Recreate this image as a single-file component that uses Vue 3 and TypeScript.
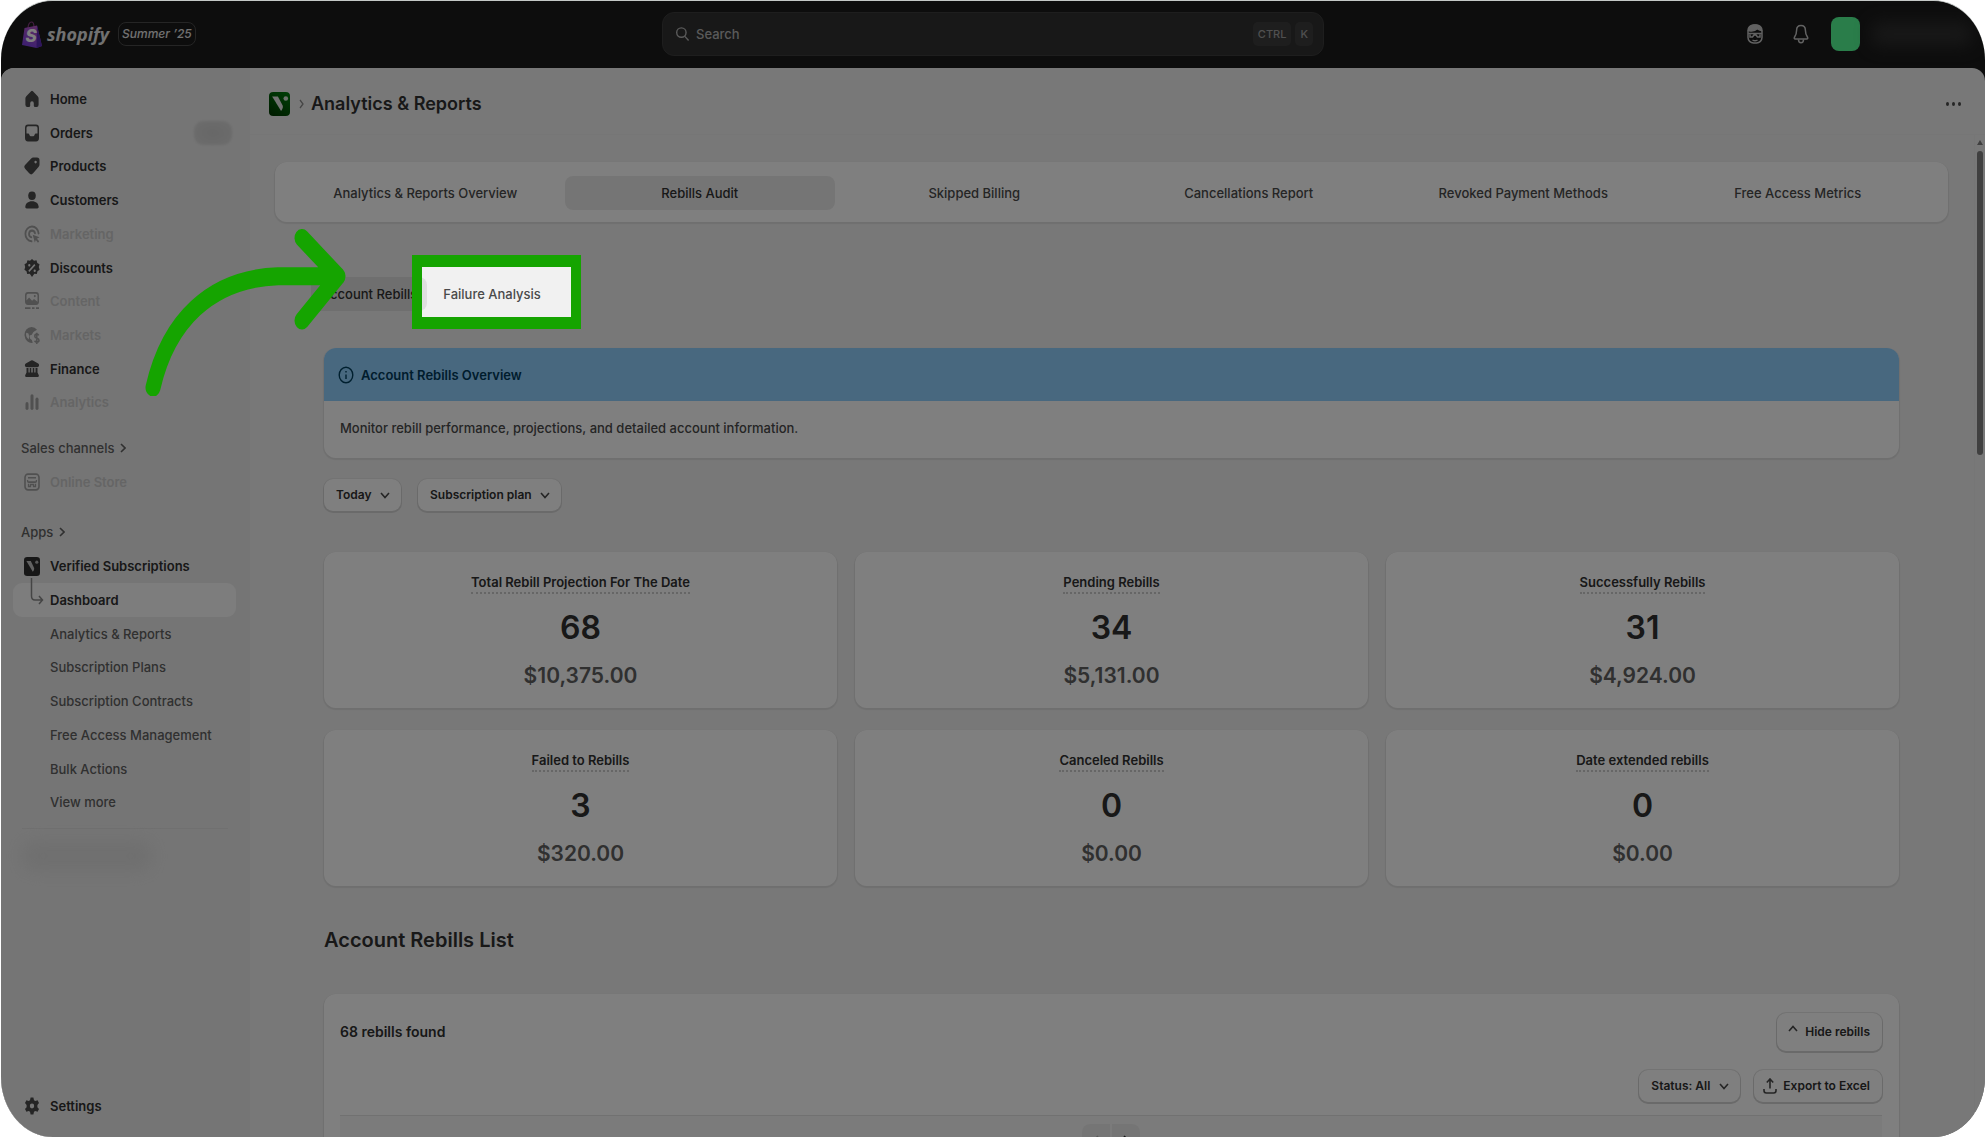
<script setup lang="ts">
import { ref } from 'vue'

interface NavItem {
  label: string
  icon: string
  muted?: boolean
  badge?: boolean
}

interface Metric {
  title: string
  count: number
  amount: string
}

const icons: Record<string, string> = {
  home: '<path d="M8.9 1.1a1.4 1.4 0 0 0-1.8 0L2.3 5.6A2.6 2.6 0 0 0 1.4 7.500V13A2 2 0 0 0 3.400 15h1.800a1 1 0 0 0 1-1v-2.300a1.800 1.800 0 0 1 3.600 0V14a1 1 0 0 0 1 1h1.800a2 2 0 0 0 2-2V7.500a2.600 2.600 0 0 0-.9-1.900z"/>',
  orders: '<path fill-rule="evenodd" d="M4 .5h8A3 3 0 0 1 15 3.500v9a3 3 0 0 1-3 3H4a3 3 0 0 1-3-3v-9A3 3 0 0 1 4 .5zM4 2A1.500 1.500 0 0 0 2.500 3.500V8.500h1.700c.5 0 .9.300 1.100.8l.4.900c.2.400.6.600 1 .6h2.600c.4 0 .8-.2 1-.6l.4-.9c.2-.5.6-.8 1.100-.8h1.700v-5A1.500 1.500 0 0 0 12 2z"/>',
  products: '<path fill-rule="evenodd" d="M9.300.5h3.700a2.500 2.500 0 0 1 2.500 2.500v3.700c0 .8-.3 1.500-.8 2l-5.600 5.800a2.700 2.700 0 0 1-3.900 0L1.300 10.700a2.700 2.700 0 0 1 0-3.900l5.900-5.500A3 3 0 0 1 9.300.5zM11.600 5.700a1.200 1.200 0 1 0 0-2.400 1.200 1.200 0 0 0 0 2.400z"/>',
  customers: '<circle cx="8" cy="4.200" r="3.800"/><path d="M1.300 14C1.600 11 4 9 8 9s6.400 2 6.700 5c.1.900-.6 1.500-1.400 1.500H2.700c-.8 0-1.500-.6-1.400-1.500z"/>',
  marketing: '<path d="M7.500 14.500A6.600 6.600 0 1 1 14.600 7.500" fill="none" stroke="currentColor" stroke-width="1.800" stroke-linecap="round"/><path d="M7.300 10.900A3 3 0 1 1 11 7.400" fill="none" stroke="currentColor" stroke-width="1.800" stroke-linecap="round"/><path d="m8.700 8.700 6.800 2.200-2.600 1.300 2.300 2.300-1.200 1.200-2.200-2.300-1 2.200z"/>',
  discounts: '<path fill-rule="evenodd" d="m8 0 2 1.500 2.500-.3.800 2.300 2.200 1.200L14.800 7.200l.8 2.400-2.100 1.300-.7 2.400-2.500-.1L8 16l-2.200-2.800-2.600.1-.7-2.400L.4 9.600l.8-2.400L.5 4.700l2.200-1.200.8-2.300L6 1.500zM5.300 6.600a1.100 1.100 0 1 0 0-2.200 1.100 1.100 0 0 0 0 2.200zm5.400 5a1.100 1.100 0 1 0 0-2.200 1.100 1.100 0 0 0 0 2.200zM10.300 4.500l-6 6 1.100 1.100 6-6z"/>',
  content: '<path fill-rule="evenodd" d="M4 0h8a3 3 0 0 1 3 3v5.500a3 3 0 0 1-3 3H4a3 3 0 0 1-3-3V3a3 3 0 0 1 3-3zm0 1.600A1.500 1.500 0 0 0 2.500 3v4.500l2.600-2.700 3 3 1.900-1.600 3.500 2.500V3A1.500 1.500 0 0 0 12 1.600zm6.800 3a1 1 0 1 0 0-2 1 1 0 0 0 0 2z"/><path d="M1 13.500h5.500V15H1zM8 13.500h2.500V15H8zM12 13.500h3V15h-3z"/>',
  markets: '<path fill-rule="evenodd" d="M7.500.8a7.100 7.100 0 1 0 1.300 14.100l-1-2.400L6 11.200 5.600 8.500l2.200-.8 1.600-2.300L13 3.300A7 7 0 0 0 7.500.8zM2.300 6l2.200.7.7 2.700-.6 2.700A5.500 5.500 0 0 1 2.300 6z"/><path d="M14.800 8.300c-.5-.8-1.300-1-2-1-1.200 0-2 .7-2 1.700 0 2.500 4.200 1.200 4.200 3.600 0 1-.9 1.700-2.200 1.700-.9 0-1.700-.4-2.200-1.200M12.800 6v10" fill="none" stroke="currentColor" stroke-width="1.500"/>',
  finance: '<path d="M7.100.5a2 2 0 0 1 1.800 0l5.300 2.700c1.500.8 1 3.300-.9 3.300H2.700C.8 6.500.3 4 1.800 3.200zM2.500 7h2v4.500h-2zM5.700 7h1.600v4.500H5.700zM8.700 7h1.600v4.500H8.700zM11.500 7h2v4.500h-2zM2.500 11h11l1.300 2.600c.3.800-.2 1.400-1 1.400H2.200c-.8 0-1.300-.6-1-1.400z"/>',
  analytics: '<rect x="6.500" y="1" width="3" height="14" rx="1.500"/><rect x="1.500" y="8" width="3" height="7" rx="1.500"/><rect x="11.500" y="4" width="3" height="11" rx="1.500"/>',
  store: '<rect x="1" y="1" width="14" height="14" rx="3" fill="none" stroke="currentColor" stroke-width="1.600"/><path d="M4 4.200h8M3.600 6.200v1.200c0 1 2.200 1 2.200 0 0 1 2.200 1 2.200 0 0 1 2.200 1 2.200 0 0 1 2.200 1 2.200 0V6.200M4.500 9.500V12h2V10.200h3V12h2V9.500" fill="none" stroke="currentColor" stroke-width="1.300"/>',
  settings: '<path fill-rule="evenodd" d="M6.600.5h2.800l.6 2.300 1.300.7 2.300-.6 1.400 2.400L13.400 7v2l1.600 1.700-1.400 2.400-2.300-.6-1.300.7-.6 2.300H6.600L6 13.200l-1.300-.7-2.300.6L1 10.700 2.600 9V7L1 5.300l1.400-2.400 2.300.6L6 2.800zM8 10.200a2.200 2.200 0 1 0 0-4.400 2.200 2.200 0 0 0 0 4.400z"/>',
}

const mainNav: NavItem[] = [
  { label: 'Home', icon: 'home' },
  { label: 'Orders', icon: 'orders', badge: true },
  { label: 'Products', icon: 'products' },
  { label: 'Customers', icon: 'customers' },
  { label: 'Marketing', icon: 'marketing', muted: true },
  { label: 'Discounts', icon: 'discounts' },
  { label: 'Content', icon: 'content', muted: true },
  { label: 'Markets', icon: 'markets', muted: true },
  { label: 'Finance', icon: 'finance' },
  { label: 'Analytics', icon: 'analytics', muted: true },
]

const appPages = [
  'Dashboard',
  'Analytics & Reports',
  'Subscription Plans',
  'Subscription Contracts',
  'Free Access Management',
  'Bulk Actions',
  'View more',
]

const tabs = [
  'Analytics & Reports Overview',
  'Rebills Audit',
  'Skipped Billing',
  'Cancellations Report',
  'Revoked Payment Methods',
  'Free Access Metrics',
]
const activeTab = ref('Rebills Audit')

const metrics: Metric[] = [
  { title: 'Total Rebill Projection For The Date', count: 68, amount: '$10,375.00' },
  { title: 'Pending Rebills', count: 34, amount: '$5,131.00' },
  { title: 'Successfully Rebills', count: 31, amount: '$4,924.00' },
  { title: 'Failed to Rebills', count: 3, amount: '$320.00' },
  { title: 'Canceled Rebills', count: 0, amount: '$0.00' },
  { title: 'Date extended rebills', count: 0, amount: '$0.00' },
]
</script>

<template>
  <div class="frame">
    <header class="topbar">
      <div class="brand">
        <svg class="bag" viewBox="0 0 20 27" aria-hidden="true">
          <defs>
            <linearGradient id="bag-fill" x1="0.8" y1="0" x2="0.4" y2="1">
              <stop offset="0" stop-color="#c05ac8" />
              <stop offset="1" stop-color="#7a3fe0" />
            </linearGradient>
          </defs>
          <path d="M6 7C6 3 8 1 9.500 1S12 3 12 6" fill="none" stroke="#8a3c86" stroke-width="1.200" />
          <path d="M2.500 7 15 4.500 20 25 14.500 27 0 24z" fill="url(#bag-fill)" />
          <path d="M15 4.500 20 25l-5.500 2z" fill="#5a2bb8" />
          <text x="3.500" y="21" class="bag-letter">S</text>
        </svg>
        <span class="wordmark">shopify</span>
        <span class="edition">Summer ’25</span>
      </div>

      <label class="search">
        <svg viewBox="0 0 16 16" aria-hidden="true">
          <circle cx="6.800" cy="6.500" r="5" />
          <path d="m10.500 10.500 4 4.500" />
        </svg>
        <input type="search" placeholder="Search" aria-label="Search" />
        <kbd>CTRL</kbd>
        <kbd>K</kbd>
      </label>

      <div class="tools">
        <button type="button" class="icon-button" aria-label="Assistant">
          <svg class="sidekick" viewBox="0 0 16 20" aria-hidden="true">
            <rect x="1" y="1" width="14" height="18" rx="5.500" />
            <path class="solid" d="M1.500 6.500C2 3 4.500 1 8 1s6 2 6.500 5.500c-1.800-.2-3-.8-4-2C8.500 6.500 5 7.500 1.500 6.500z" />
            <path d="M1.200 9.500h13.600M3 10.500v2.500h2.500l1.500-2h2l1.500 2H13v-2.500M5.500 16c1.500 1 3.500 1 5 0" />
          </svg>
        </button>
        <button type="button" class="icon-button" aria-label="Notifications">
          <svg class="bell" viewBox="0 0 16 20" aria-hidden="true">
            <path d="M8 1.500c-2.800 0-4.400 2-4.400 4.800 0 4.200-1.200 5.600-2.200 7-.5.800 0 1.700.8 1.700h11.600c.8 0 1.300-.9.800-1.700-1-1.400-2.200-2.800-2.200-7C12.400 3.500 10.800 1.500 8 1.500z" />
            <path d="M5.500 15.500c0 2 1 3.300 2.500 3.300s2.500-1.300 2.500-3.300" />
          </svg>
        </button>
        <div class="account">
          <span class="avatar"></span>
          <span class="account-name"></span>
        </div>
      </div>
    </header>

    <div class="shell">
      <nav class="sidebar" aria-label="Main">
        <ul class="nav-list nav-main">
          <li v-for="item in mainNav" :key="item.label">
            <a href="#" class="nav-link" :class="{ muted: item.muted }">
              <svg class="nav-icon" viewBox="0 0 16 16" preserveAspectRatio="none" aria-hidden="true" v-html="icons[item.icon]"></svg>
              <span>{{ item.label }}</span>
              <i v-if="item.badge" class="count-badge"></i>
            </a>
          </li>
        </ul>

        <button type="button" class="section-toggle">
          Sales channels
          <svg viewBox="0 0 6 10" aria-hidden="true"><path d="m1 1 4 4-4 4" /></svg>
        </button>
        <a href="#" class="nav-link muted">
          <svg class="nav-icon" viewBox="0 0 16 16" preserveAspectRatio="none" aria-hidden="true" v-html="icons.store"></svg>
          <span>Online Store</span>
        </a>

        <button type="button" class="section-toggle apps-toggle">
          Apps
          <svg viewBox="0 0 6 10" aria-hidden="true"><path d="m1 1 4 4-4 4" /></svg>
        </button>
        <ul class="nav-list nav-apps">
          <li>
            <a href="#" class="nav-link">
              <svg class="app-icon" viewBox="0 0 20 24" preserveAspectRatio="none" aria-hidden="true">
                <rect width="20" height="24" rx="4" fill="#2e2e2e" />
                <path d="M3 5h5.500l4 8.500c.6 1.500 0 3.500-1.500 5z" fill="#c4c4c4" />
                <circle cx="16" cy="6.500" r="2" fill="#b0b0b0" />
              </svg>
              <span>Verified Subscriptions</span>
            </a>
          </li>
          <li v-for="(page, i) in appPages" :key="page">
            <a href="#" class="nav-link sub" :class="{ active: i === 0 }">
              <svg v-if="i === 0" class="branch" viewBox="0 0 14 28" aria-hidden="true">
                <path d="M1.500 0v18c0 2.500 1 4 3.500 4h7M9 18l3.500 4L9 26" />
              </svg>
              <span>{{ page }}</span>
            </a>
          </li>
        </ul>
        <div class="pinned"><i></i></div>

        <a href="#" class="nav-link settings">
          <svg class="nav-icon" viewBox="0 0 16 16" preserveAspectRatio="none" aria-hidden="true" v-html="icons.settings"></svg>
          <span>Settings</span>
        </a>
      </nav>

      <main class="main">
        <div class="page-head">
          <svg class="page-icon" viewBox="0 0 20 24" preserveAspectRatio="none" aria-hidden="true">
            <defs>
              <linearGradient id="app-fill" x1="0.2" y1="1" x2="0.8" y2="0">
                <stop offset="0" stop-color="#003a00" />
                <stop offset="1" stop-color="#007a0c" />
              </linearGradient>
            </defs>
            <rect width="20" height="24" rx="4" fill="url(#app-fill)" />
            <path d="M3 4.500h5.500l4.500 9c.6 1.500 0 3.500-1.500 5.500z" fill="#e6e6e6" />
            <circle cx="16" cy="6.500" r="2.200" fill="#d8e4d8" />
          </svg>
          <svg class="crumb" viewBox="0 0 6 10" aria-hidden="true"><path d="m1 1 3 4-3 4" /></svg>
          <h1>Analytics &amp; Reports</h1>
          <button type="button" class="more" aria-label="More actions"><i></i><i></i><i></i></button>
        </div>

        <div class="scroll-row">
          <div class="content">
            <div class="tab-card" role="tablist">
              <button
                v-for="tab in tabs"
                :key="tab"
                type="button"
                role="tab"
                class="tab"
                :class="{ active: tab === activeTab }"
                :aria-selected="tab === activeTab"
                @click="activeTab = tab"
              >
                {{ tab }}
              </button>
            </div>

            <div class="subtabs">
              <button type="button" class="subtab active">Account Rebills</button>
              <div class="target">
                <button type="button" class="subtab">Failure Analysis</button>
                <i class="spotlight"></i>
              </div>
            </div>

            <div class="body">
              <section class="banner">
                <h2>
                  <svg viewBox="0 0 16 18" aria-hidden="true">
                    <ellipse cx="8" cy="9" rx="6.800" ry="7.800" />
                    <path d="M8 8.500v4.500M8 5v1.500" />
                  </svg>
                  Account Rebills Overview
                </h2>
                <p>Monitor rebill performance, projections, and detailed account information.</p>
              </section>

              <div class="filters">
                <span class="picker">
                  <select aria-label="Date range"><option>Today</option></select>
                  <svg viewBox="0 0 10 7" aria-hidden="true"><path d="m1 1 4 4.500L9 1" /></svg>
                </span>
                <span class="picker">
                  <select aria-label="Subscription plan"><option>Subscription plan</option></select>
                  <svg viewBox="0 0 10 7" aria-hidden="true"><path d="m1 1 4 4.500L9 1" /></svg>
                </span>
              </div>

              <div class="metrics">
                <article v-for="metric in metrics" :key="metric.title" class="metric">
                  <h3>{{ metric.title }}</h3>
                  <strong>{{ metric.count }}</strong>
                  <span>{{ metric.amount }}</span>
                </article>
              </div>

              <h2 class="list-title">Account Rebills List</h2>

              <section class="list-card">
                <div class="list-head">
                  <h3>68 rebills found</h3>
                  <button type="button" class="button tall">
                    <svg class="caret-up" viewBox="0 0 10 7" aria-hidden="true"><path d="m1 6 4-4.500L9 6" /></svg>
                    Hide rebills
                  </button>
                </div>
                <div class="list-actions">
                  <span class="picker">
                    <select aria-label="Status"><option>Status: All</option></select>
                    <svg viewBox="0 0 10 7" aria-hidden="true"><path d="m1 1 4 4.500L9 1" /></svg>
                  </span>
                  <button type="button" class="button">
                    <svg class="export" viewBox="0 0 14 16" aria-hidden="true">
                      <path d="M7 10.500V1.200M3.800 4.500 7 1l3.200 3.500M1 11v1.500C1 14 1.800 15 3.300 15h7.400c1.500 0 2.300-1 2.300-2.500V11" />
                    </svg>
                    Export to Excel
                  </button>
                </div>
                <div class="pager">
                  <button type="button" disabled aria-label="Previous page">
                    <svg viewBox="0 0 6 10" aria-hidden="true"><path d="M5 1 1 5l4 4" /></svg>
                  </button>
                  <button type="button" aria-label="Next page">
                    <svg viewBox="0 0 6 10" aria-hidden="true"><path d="m1 1 4 4-4 4" /></svg>
                  </button>
                </div>
              </section>
            </div>
          </div>

          <div class="scrollbar" aria-hidden="true">
            <svg viewBox="0 0 6 5"><path d="M3 0 6 5H0z" /></svg>
            <i></i>
          </div>
        </div>
      </main>
    </div>

    <svg class="arrow" viewBox="0 0 204 142" preserveAspectRatio="none" aria-hidden="true">
      <path d="M9 135C24 80 66 44 134 42q30 0 60 0M158 10l36 32-36 37" />
    </svg>
  </div>
</template>

<style>
body {
  margin: 0;
  background: #fff;
}
</style>

<style scoped>
* {
  box-sizing: border-box;
}

.frame {
  position: relative;
  display: flex;
  flex-direction: column;
  height: 100vh;
  margin: 0 1px;
  overflow: hidden;
  border-top: 1px solid #c4c8c6;
  border-radius: 52px / 60px;
  background: #1a1a1a;
  color: #303030;
  font-family: Inter, "Liberation Sans", sans-serif;
  font-size: 13px;
  font-weight: 500;
  line-height: 20px;
}

button,
input,
select {
  padding: 0;
  border: 0;
  background: none;
  color: inherit;
  font: inherit;
}

h1,
h2,
h3,
p,
ul {
  margin: 0;
  padding: 0;
}

a {
  color: inherit;
  text-decoration: none;
}

svg {
  flex: none;
}

/* Top bar */
.topbar {
  display: grid;
  grid-template-columns: 1fr 662px 1fr;
  align-items: center;
  flex: none;
  height: 67px;
  padding-bottom: 1px;
}

.brand {
  display: flex;
  align-items: center;
  padding-left: 21px;
}

.bag {
  width: 20px;
  height: 27px;
}

.bag-letter {
  fill: #fff;
  font: italic 800 17px Inter, sans-serif;
}

.wordmark {
  margin-left: 5px;
  color: #e3e3e3;
  font-family: "Open Sans", Inter, sans-serif;
  font-size: 18px;
  font-style: italic;
  font-weight: 700;
  line-height: 26px;
}

.edition {
  margin-left: 9px;
  padding: 0 3px;
  border: 1px solid #4a4a4a;
  border-radius: 8px;
  color: #e3e3e3;
  font-size: 12px;
  font-style: italic;
  line-height: 22px;
}

.search {
  display: flex;
  align-items: center;
  gap: 4px;
  height: 44px;
  padding: 0 10px 0 12px;
  border: 1px solid #3c3c3c;
  border-radius: 12px;
  background: #303030;
  color: #b5b5b5;
}

.search svg {
  width: 15px;
  height: 16px;
  fill: none;
  stroke: #b5b5b5;
  stroke-width: 1.5;
}

.search input {
  flex: 1;
  min-width: 0;
  padding-left: 2px;
  outline: 0;
  font-size: 13px;
}

.search input::placeholder {
  color: #b5b5b5;
  opacity: 1;
}

kbd {
  padding: 0 5px;
  border-radius: 5px;
  background: #3d3d3d;
  color: #a0a0a0;
  font-family: inherit;
  font-size: 11px;
  line-height: 24px;
}

.tools {
  display: flex;
  align-items: center;
  justify-content: flex-end;
  padding-right: 1px;
}

.icon-button {
  display: flex;
  margin-right: 30px;
}

.icon-button svg {
  width: 16px;
  height: 20px;
  fill: none;
  stroke: #c4c4c4;
  stroke-width: 1.5;
}

.icon-button .solid {
  fill: #c4c4c4;
}

.icon-button + .icon-button {
  margin-right: 22px;
}

.account {
  display: flex;
  align-items: center;
}

.avatar {
  width: 29px;
  height: 34px;
  border-radius: 8px;
  background: #54fa94;
}

.account-name {
  width: 100px;
  height: 24px;
  margin: 0 12px;
  border-radius: 8px;
  background: #303030;
  filter: blur(8px);
}

/* Shell */
.shell {
  display: flex;
  flex: 1;
  min-height: 0;
  border-radius: 13px 13px 0 0;
  background: #f1f1f1;
}

.sidebar {
  display: flex;
  flex: none;
  flex-direction: column;
  width: 249px;
  padding: 14px 14px 14px 12px;
  border-radius: 13px 0 0;
  background: #ebebeb;
}

.nav-list {
  display: flex;
  flex: none;
  flex-direction: column;
  list-style: none;
}

.nav-list li {
  flex: 1 1 0;
  min-height: 0;
}

.nav-main {
  height: 337px;
}

.nav-apps {
  height: 270px;
}

.nav-link {
  display: flex;
  position: relative;
  align-items: center;
  gap: 10px;
  height: 34px;
  padding-left: 11px;
  border-radius: 9px;
  font-weight: 600;
}

.nav-link.muted {
  color: #cacaca;
}

.nav-icon {
  width: 16px;
  height: 18px;
  fill: currentColor;
  color: #4a4a4a;
}

.muted .nav-icon {
  color: #a0a0a0;
}

.count-badge {
  width: 38px;
  height: 24px;
  margin: 0 4px 0 auto;
  border-radius: 9px;
  background: radial-gradient(#cfcfcf, #dadada);
  filter: blur(1px);
}

.section-toggle {
  display: flex;
  align-items: center;
  align-self: flex-start;
  gap: 6px;
  height: 34px;
  margin-top: 12px;
  padding-left: 8px;
  color: #616161;
}

.apps-toggle {
  margin-top: 16px;
}

.section-toggle svg {
  width: 6px;
  height: 10px;
  fill: none;
  stroke: #616161;
  stroke-width: 1.6;
}

.app-icon {
  width: 16px;
  height: 19px;
}

.nav-link.sub {
  padding-left: 37px;
  color: #616161;
  font-weight: 500;
}

.nav-link.sub.active {
  background: #fafafa;
  color: #303030;
  font-weight: 600;
}

.branch {
  position: absolute;
  top: -5px;
  left: 17px;
  width: 14px;
  height: 28px;
  fill: none;
  stroke: #8a8a8a;
  stroke-width: 1.5;
}

.pinned {
  margin: 9px 8px 0 9px;
  padding: 12px 0;
  border-top: 1px solid #e0e0e0;
}

.pinned i {
  display: block;
  width: 130px;
  height: 30px;
  border-radius: 10px;
  background: #dedede;
  filter: blur(9px);
}

.settings {
  margin-top: auto;
}

/* Page */
.main {
  display: flex;
  flex: 1;
  flex-direction: column;
  min-width: 0;
}

.page-head {
  display: flex;
  align-items: center;
  flex: none;
  height: 67px;
  padding: 6px 24px 0 19px;
  border-bottom: 1px solid #ececec;
}

.page-icon {
  width: 21px;
  height: 24px;
}

.crumb {
  width: 6px;
  height: 10px;
  margin: 0 6px 0 9px;
  fill: none;
  stroke: #8a8a8a;
  stroke-width: 1.3;
}

h1 {
  font-size: 18px;
  font-weight: 600;
  line-height: 24px;
}

.more {
  display: flex;
  gap: 3px;
  margin-left: auto;
}

.more i {
  width: 3px;
  height: 4px;
  border-radius: 50%;
  background: #4a4a4a;
}

.scroll-row {
  display: flex;
  flex: 1;
  min-height: 0;
}

.content {
  flex: 1;
  min-width: 0;
  padding: 27px 26px 0 25px;
}

.scrollbar {
  display: flex;
  flex: none;
  flex-direction: column;
  align-items: center;
  gap: 6px;
  width: 11px;
  padding-top: 5px;
  border-left: 1px solid #ececec;
}

.scrollbar svg {
  width: 6px;
  height: 5px;
  fill: #808080;
}

.scrollbar i {
  width: 6px;
  height: 304px;
  border-radius: 3px;
  background: #808080;
}

.tab-card,
.banner,
.metric,
.list-card {
  border-radius: 12px;
  background: #fff;
  box-shadow: 0 1px 1px 1px #dedede;
}

.tab-card {
  display: flex;
  gap: 4px;
  padding: 14px 15px 12px;
}

.tab {
  flex: 1 1 0;
  height: 34px;
  border-radius: 8px;
  color: #4a4a4a;
  font-size: 13px;
  font-weight: 500;
  text-align: center;
}

.tab.active {
  background: #ebebeb;
  color: #303030;
}

.subtabs {
  display: flex;
  padding: 55px 36px 0;
}

.subtab {
  height: 34px;
  padding: 0 16px;
  border-radius: 8px;
  color: #4a4a4a;
}

.subtab.active {
  padding: 0 10px;
  background: #dfdfdf;
  color: #303030;
}

.target {
  position: relative;
}

/* The spread of the shadow dims everything outside the highlighted tab. */
.spotlight {
  position: absolute;
  z-index: 5;
  inset: -22px -24px -18px -15px;
  border: solid #15a400;
  border-width: 12px 10px;
  box-shadow: 0 0 0 4000px rgba(0, 0, 0, 0.5);
  pointer-events: none;
}

.arrow {
  position: absolute;
  z-index: 6;
  top: 225px;
  left: 143px;
  width: 204px;
  height: 170px;
  fill: none;
  stroke: #15a400;
  stroke-linecap: round;
  stroke-linejoin: round;
  stroke-width: 15;
}

.body {
  padding: 37px 49px 0;
}

.banner {
  overflow: hidden;
}

.banner h2 {
  display: flex;
  align-items: center;
  gap: 7px;
  height: 53px;
  padding: 0 14px;
  background: #91d0ff;
  color: #003a5a;
  font-size: 13px;
  font-weight: 600;
}

.banner h2 svg {
  width: 16px;
  height: 18px;
  fill: none;
  stroke: #00405f;
  stroke-width: 1.4;
}

.banner p {
  padding: 17px 16px 20px;
  color: #4a4a4a;
  font-size: 13px;
}

.filters {
  display: flex;
  gap: 17px;
  padding-top: 21px;
}

.picker {
  display: flex;
  position: relative;
}

.picker select,
.button {
  height: 32px;
  border-radius: 9px;
  background: #fff;
  box-shadow: 0 1px 0 1px #d4d4d4, 0 0 0 1px #e6e6e6;
  color: #303030;
  font-size: 12px;
  font-weight: 600;
}

.picker select {
  padding: 0 29px 0 12px;
  appearance: none;
}

.picker svg {
  position: absolute;
  top: 13px;
  right: 11px;
  width: 10px;
  height: 7px;
  pointer-events: none;
}

.picker svg,
.button svg {
  fill: none;
  stroke: #4a4a4a;
  stroke-width: 1.6;
}

.metrics {
  display: grid;
  grid-template-columns: repeat(3, 1fr);
  gap: 22px 18px;
  padding-top: 41px;
}

.metric {
  display: flex;
  flex-direction: column;
  align-items: center;
  height: 156px;
  padding-top: 20px;
}

.metric h3 {
  border-bottom: 2px dotted #cccccc;
  font-size: 13px;
  font-weight: 600;
}

.metric strong {
  margin-top: 14px;
  font-size: 32px;
  font-weight: 600;
  line-height: 40px;
}

.metric span {
  margin-top: 14px;
  color: #616161;
  font-size: 21px;
  font-weight: 600;
  line-height: 28px;
}

.list-title {
  padding-top: 38px;
  font-size: 20px;
  font-weight: 600;
  line-height: 32px;
}

.list-card {
  margin-top: 38px;
  padding: 19px 17px 18px 16px;
}

.list-head {
  display: flex;
  align-items: center;
  justify-content: space-between;
}

.list-head h3 {
  font-size: 14px;
  font-weight: 600;
}

.button {
  display: flex;
  align-items: center;
  gap: 6px;
  padding: 0 12px 0 9px;
}

.button.tall {
  gap: 7px;
  height: 38px;
  padding-left: 11px;
}

.caret-up {
  width: 10px;
  height: 7px;
  margin-bottom: 8px;
}

.export {
  width: 14px;
  height: 16px;
}

.list-actions {
  display: flex;
  justify-content: flex-end;
  gap: 14px;
  padding: 19px 0 13px;
}

.pager {
  display: flex;
  justify-content: center;
  gap: 2px;
  height: 60px;
  padding-top: 8px;
  border-top: 1px solid #e3e3e3;
  background: #f7f7f7;
}

.pager button {
  width: 28px;
  height: 32px;
  border-radius: 8px 0 0 8px;
  background: #ebebeb;
}

.pager button + button {
  border-radius: 0 8px 8px 0;
}

.pager svg {
  width: 6px;
  height: 10px;
  fill: none;
  stroke: #303030;
  stroke-width: 1.6;
}

.pager button:disabled svg {
  stroke: #b5b5b5;
}
</style>
